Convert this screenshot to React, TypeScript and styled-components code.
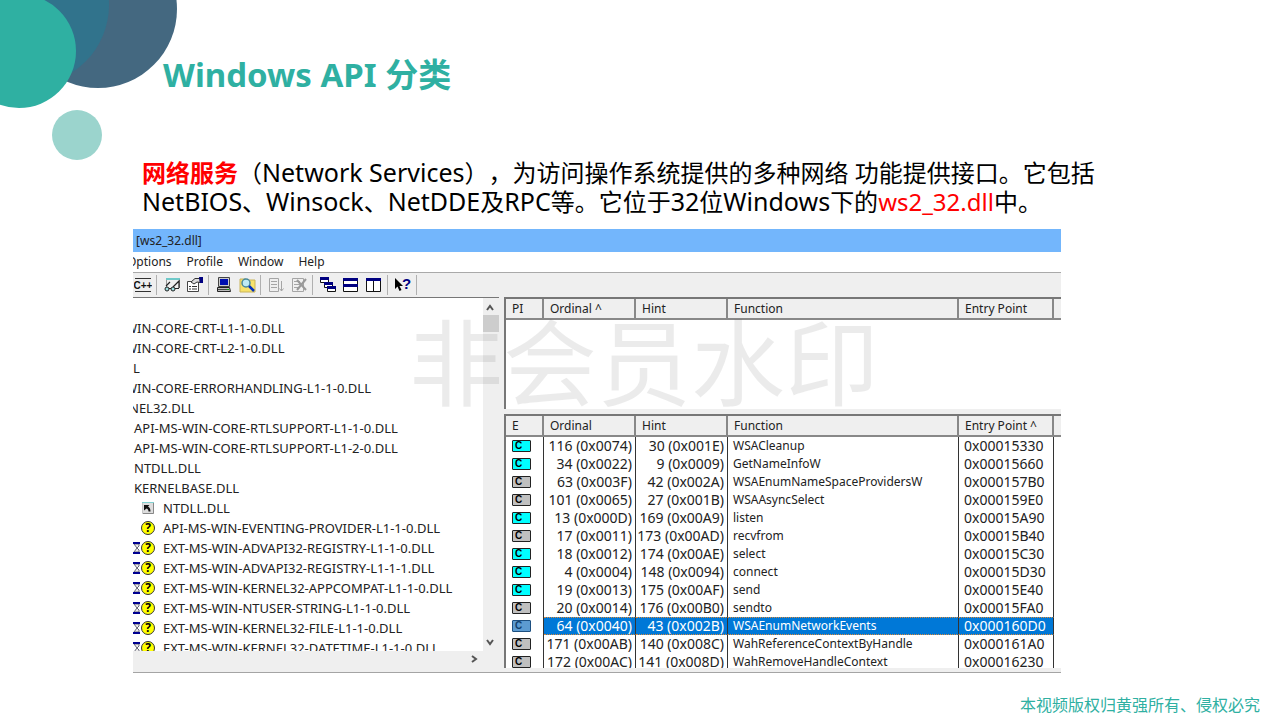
import React from "react";
import styled, { createGlobalStyle } from "styled-components";

const GlobalStyle = createGlobalStyle`
  *, *::before, *::after { box-sizing: border-box; }
  body { margin: 0; background: #fff; }
  button { border: 0; padding: 0; background: none; font: inherit; color: inherit; }
`;

const slideFont = `"Noto Sans", "Noto Sans CJK SC", sans-serif`;
const teal = "#2fb0a2";

const Slide = styled.main`
  position: relative;
  display: flex;
  flex-direction: column;
  min-height: 100vh;
  padding-top: 55px;
  overflow: hidden;
  font-family: ${slideFont};
  color: #000;
`;

const Bubbles = styled.svg`
  position: absolute;
  left: 0;
  top: 0;
`;

const Title = styled.h1`
  position: relative;
  margin: 0 0 63px 163px;
  font-size: 33px;
  line-height: 40px;
  font-weight: 700;
  color: ${teal};
`;

const Description = styled.p`
  margin: 0 0 13px 142px;
  font-size: 24px;
  line-height: 29px;
  white-space: nowrap;
  text-spacing-trim: space-all;
`;

const Latin = styled.span`
  font-size: 25px;
  line-height: 24px;
`;

const Red = styled.span<{ $bold?: boolean }>`
  color: #f00;
  font-weight: ${(p) => (p.$bold ? 700 : 400)};
`;

const Footer = styled.footer`
  margin: 20px 20px 3px;
  font-size: 16px;
  line-height: 24px;
  text-align: right;
  color: ${teal};
`;

const AppWindow = styled.section`
  position: relative;
  margin: 0 219px 0 133px;
  overflow: hidden;
  background: #efefef;
  border-bottom: 1px solid #a4a4a4;
  font-size: 12px;
  color: #222;
`;

const TitleBar = styled.div`
  padding-left: 3px;
  background: #73b6fc;
  line-height: 23px;
`;

const MenuBar = styled.nav`
  display: flex;
  gap: 15px;
  height: 20px;
  margin-left: -6px;
  background: #fff;
  line-height: 20px;
`;

const Toolbar = styled.div`
  display: flex;
  align-items: center;
  height: 25px;
  margin-left: -2px;
  border-top: 1px solid #a9a9a9;
`;

const ToolButton = styled.button`
  display: flex;
  justify-content: center;
  width: 23px;
`;

const Separator = styled.span`
  width: 1px;
  height: 20px;
  margin: 0 3px 0 2px;
  background: #b0b0b0;
`;

const Work = styled.div`
  display: grid;
  grid-template-columns: 371px 1fr;
  height: 375px;
  padding-bottom: 4px;
`;

const TreePane = styled.div`
  display: grid;
  grid-template-columns: 1fr 16px;
  grid-template-rows: 1fr 17px;
  margin-right: 5px;
  border-top: 1px solid #777;
  overflow: hidden;
`;

const Tree = styled.ul`
  margin: 0;
  padding: 0;
  list-style: none;
  overflow: hidden;
  background: #fff;
  font-size: 13px;
`;

const TreeRow = styled.li<{ $indent: number }>`
  display: flex;
  align-items: center;
  height: 20px;
  margin-left: ${(p) => p.$indent}px;
  line-height: 20px;
  white-space: nowrap;
`;

const RowIcons = styled.span`
  display: flex;
  justify-content: flex-end;
  align-items: center;
  width: 22px;
  margin-right: 8px;
`;

const Unknown = styled.span`
  flex: none;
  width: 14px;
  height: 14px;
  border: 1px solid #333;
  border-radius: 7px;
  background: #ff0;
  color: #000;
  font-size: 12px;
  font-weight: 700;
  line-height: 12px;
  text-align: center;
`;

const VScroll = styled.div`
  display: flex;
  flex-direction: column;
  grid-row: span 2;
  padding-bottom: 17px;
`;

const HScroll = styled.div`
  display: flex;
  justify-content: flex-end;
`;

const ArrowButton = styled.button`
  display: flex;
  align-items: center;
  justify-content: center;
  width: 16px;
  height: 17px;
`;

const Thumb = styled.span`
  height: 17px;
  margin-bottom: auto;
  background: #cdcdcd;
`;

const Lists = styled.div`
  display: grid;
  grid-template-rows: 112px 1fr;
  gap: 5px;
  min-width: 0;
  overflow: hidden;
`;

const ListPane = styled.div`
  overflow: hidden;
  background: #fff;
  border-top: 2px solid #777;
  border-left: 2px solid #777;
`;

const DataTable = styled.table`
  width: 100%;
  table-layout: fixed;
  border-collapse: separate;
  border-spacing: 0;
`;

const HeadCell = styled.th`
  height: 21px;
  padding: 0 0 0 6px;
  background: #efefef;
  border-bottom: 2px solid #888;
  border-right: 2px solid #888;
  font-weight: 400;
  line-height: 18px;
  text-align: left;
  white-space: nowrap;
  &:last-child { border-right: 0; }
`;

const BodyRow = styled.tr<{ $selected?: boolean }>`
  color: ${(p) => (p.$selected ? "#fff" : "#222")};
  td:nth-child(n + 2):nth-child(-n + 5) {
    background: ${(p) => (p.$selected ? "#0078d7" : "transparent")};
    border-top: ${(p) => (p.$selected ? "1px dotted #d98a3c" : "0")};
    border-bottom: ${(p) => (p.$selected ? "1px dotted #d98a3c" : "0")};
  }
`;

const Cell = styled.td<{ $kind?: "number" | "entry" | "icon" }>`
  height: 18px;
  padding: ${(p) => (p.$kind === "number" ? "0 3px 0 0" : p.$kind === "icon" ? "0 0 0 6px" : "0 0 0 5px")};
  border-right: 1px solid #333;
  font-size: ${(p) => (p.$kind === "number" || p.$kind === "entry" ? 14 : 12)}px;
  line-height: 16px;
  text-align: ${(p) => (p.$kind === "number" ? "right" : "left")};
  white-space: nowrap;
  &:last-child { border-right: 0; }
`;

const Badge = styled.span<{ $tone: Tone }>`
  display: block;
  width: 19px;
  height: 12px;
  padding-left: 2px;
  border: 1px solid ${(p) => (p.$tone === "blue" ? "#1c4f80" : "#222")};
  border-radius: 1px;
  background: ${(p) => ({ cyan: "#00ffff", gray: "#c0c0c0", blue: "#5c9bd1" })[p.$tone]};
  color: ${(p) => (p.$tone === "blue" ? "#123f6c" : "#000")};
  font: 700 10px/10px "Liberation Sans", sans-serif;
`;

const Watermark = styled.div`
  position: absolute;
  left: 8px;
  right: 0;
  top: 311px;
  font-family: "Noto Sans CJK SC", sans-serif;
  font-size: 94px;
  line-height: 94px;
  text-align: center;
  color: rgba(0, 0, 0, 0.08);
  pointer-events: none;
`;

type Tone = "cyan" | "gray" | "blue";

const Icon = ({ children }: { children: React.ReactNode }) => (
  <svg width="18" height="18" viewBox="0 0 18 18" fill="none">{children}</svg>
);

const CppIcon = () => (
  <Icon>
    <path d="M1 2.5h16M1 15.5h16" stroke="#333" />
    <text x="9" y="12.5" textAnchor="middle" fontFamily="Liberation Sans" fontWeight="700" fontSize="10" fill="#111">C++</text>
  </Icon>
);
const GlassesIcon = () => (
  <Icon>
    <path d="M3 2h14v2H3z" fill="#6fc9c9" />
    <path d="M3.5 4v7M16.5 4v8" stroke="#999" />
    <path d="M3 10l4-4M10 11l6-6v7" stroke="#222" strokeWidth="1.2" />
    <circle cx="4" cy="13" r="2" fill="#9fe0e0" stroke="#222" />
    <circle cx="10" cy="13" r="2" fill="#9fe0e0" stroke="#222" />
    <path d="M6 12.5h2M12 12.5h4" stroke="#222" />
  </Icon>
);
const PropertiesIcon = () => (
  <Icon>
    <path d="M1.5 5.500h11v10h-11z" fill="#fff" stroke="#444" />
    <path d="M3 10.500h2M6 10.500h5M3 13h2M6 13h5" stroke="#333" />
    <path d="M5 6l4-3.500h5v4l-3-.5-3 2z" fill="#ddd" stroke="#333" />
    <path d="M13 1h4v6h-3z" fill="#000080" />
  </Icon>
);
const ComputerIcon = () => (
  <Icon>
    <path d="M3.500 1.500h11v9h-11z" fill="#ccc" stroke="#444" />
    <path d="M5 3h8v6H5z" fill="#0010b0" />
    <path d="M2.500 11.500h12l1 4h-13z" fill="#bbb" stroke="#222" />
    <path d="M3 13.500h9" stroke="#444" />
    <path d="M12 13.500h2" stroke="#0a0" />
  </Icon>
);
const SearchIcon = () => (
  <Icon>
    <path d="M2 3h6l1 1h8v12H2z" fill="#f7e26b" stroke="#c9b45a" />
    <circle cx="8" cy="7" r="4" fill="#bdeaf4" stroke="#48899b" strokeWidth="1.5" />
    <path d="M11 10l5 5" stroke="#0030c0" strokeWidth="2.5" />
  </Icon>
);
const ListDownIcon = () => (
  <Icon>
    <path d="M2.500 2.500h9v13h-9zM4 5.500h6M4 8.500h6M4 11.500h6M14.500 5v10M12.500 12.500l2 2.500 2-2.500" stroke="#a5a5a5" />
  </Icon>
);
const ListCrossIcon = () => (
  <Icon>
    <path d="M2.500 2.500h11v13h-11zM4 5.500h6M4 8.500h6M4 11.500h6" stroke="#a5a5a5" />
    <path d="M7 4l9 10M16 3L7 14" stroke="#999" strokeWidth="2" />
  </Icon>
);
const CascadeIcon = () => (
  <Icon>
    {[[1, 1], [5, 6], [8, 10]].map(([x, y]) => (
      <g key={x}>
        <path d={`M${x}.5 ${y}.5h8v5h-8z`} fill="#fff" stroke="#111" />
        <path d={`M${x} ${y}h9v3h-9z`} fill="#000080" />
      </g>
    ))}
  </Icon>
);
const TileRowsIcon = () => (
  <Icon>
    <path d="M1.500 2.500h14v13h-14z" fill="#fff" stroke="#111" />
    <path d="M1 2h15v3H1zM1 8h15v3H1z" fill="#000080" />
  </Icon>
);
const TileColumnsIcon = () => (
  <Icon>
    <path d="M1.500 2.500h14v13h-14zM8.500 2.500v13" fill="#fff" stroke="#111" />
    <path d="M1 2h15v3H1z" fill="#000080" />
  </Icon>
);
const HelpIcon = () => (
  <Icon>
    <path d="M1 2v11l2.500-2.500L5.500 15l2-1-2-4H9z" fill="#000" />
    <text x="8" y="13" fontFamily="Liberation Sans" fontWeight="700" fontSize="15" fill="#000080">?</text>
  </Icon>
);
const Hourglass = () => (
  <svg width="8" height="14" viewBox="0 0 8 14" fill="none">
    <path d="M1 3l3 4-3 4h5V9L4 7l2-2V3z" fill="#eee" stroke="#667" />
    <path d="M0 2h7M0 12h7" stroke="#000090" strokeWidth="2" />
  </svg>
);
const Duplicate = () => (
  <svg width="14" height="14" viewBox="0 0 14 14" fill="none">
    <path d="M1.500 1.500h11v11h-11z" fill="#ddd" stroke="#c4c4c4" />
    <path d="M1 1.500h12" stroke="#7fd0d0" />
    <path d="M12.500 2v10.500H2" stroke="#888" />
    <path d="M3 4h5.500L7 5.500c2 1 2.500 3 2.500 5H7.500c0-1.500-.5-2.500-2-3L3 9.500z" fill="#111" />
  </svg>
);
const Chevron = ({ d }: { d: string }) => (
  <svg width="10" height="10" viewBox="0 0 10 10" fill="none">
    <path d={d} stroke="#555" strokeWidth="2" />
  </svg>
);

const tools: ([string, () => React.JSX.Element] | null)[] = [
  ["Undecorate C++", CppIcon],
  null,
  ["View", GlassesIcon],
  ["Properties", PropertiesIcon],
  null,
  ["System information", ComputerIcon],
  ["Search order", SearchIcon],
  null,
  ["Auto expand", ListDownIcon],
  ["Clear", ListCrossIcon],
  null,
  ["Cascade", CascadeIcon],
  ["Tile horizontally", TileRowsIcon],
  ["Tile vertically", TileColumnsIcon],
  null,
  ["Help", HelpIcon],
  null,
];

type Mark = "dup" | "unknown" | "delayed";
const modules: [string, number, Mark?][] = [
  ["", 0],
  ["WIN-CORE-CRT-L1-1-0.DLL", -8],
  ["WIN-CORE-CRT-L2-1-0.DLL", -8],
  ["L", 0],
  ["WIN-CORE-ERRORHANDLING-L1-1-0.DLL", -8],
  ["NEL32.DLL", -4],
  ["API-MS-WIN-CORE-RTLSUPPORT-L1-1-0.DLL", 1],
  ["API-MS-WIN-CORE-RTLSUPPORT-L1-2-0.DLL", 1],
  ["NTDLL.DLL", 1],
  ["KERNELBASE.DLL", 1],
  ["NTDLL.DLL", 0, "dup"],
  ["API-MS-WIN-EVENTING-PROVIDER-L1-1-0.DLL", 0, "unknown"],
  ["EXT-MS-WIN-ADVAPI32-REGISTRY-L1-1-0.DLL", 0, "delayed"],
  ["EXT-MS-WIN-ADVAPI32-REGISTRY-L1-1-1.DLL", 0, "delayed"],
  ["EXT-MS-WIN-KERNEL32-APPCOMPAT-L1-1-0.DLL", 0, "delayed"],
  ["EXT-MS-WIN-NTUSER-STRING-L1-1-0.DLL", 0, "delayed"],
  ["EXT-MS-WIN-KERNEL32-FILE-L1-1-0.DLL", 0, "delayed"],
  ["EXT-MS-WIN-KERNEL32-DATETIME-L1-1-0.DLL", 0, "delayed"],
];

const exportsList: [Tone, string, string, string, string][] = [
  ["cyan", "116 (0x0074)", "30 (0x001E)", "WSACleanup", "0x00015330"],
  ["cyan", "34 (0x0022)", "9 (0x0009)", "GetNameInfoW", "0x00015660"],
  ["gray", "63 (0x003F)", "42 (0x002A)", "WSAEnumNameSpaceProvidersW", "0x000157B0"],
  ["gray", "101 (0x0065)", "27 (0x001B)", "WSAAsyncSelect", "0x000159E0"],
  ["cyan", "13 (0x000D)", "169 (0x00A9)", "listen", "0x00015A90"],
  ["gray", "17 (0x0011)", "173 (0x00AD)", "recvfrom", "0x00015B40"],
  ["cyan", "18 (0x0012)", "174 (0x00AE)", "select", "0x00015C30"],
  ["cyan", "4 (0x0004)", "148 (0x0094)", "connect", "0x00015D30"],
  ["cyan", "19 (0x0013)", "175 (0x00AF)", "send", "0x00015E40"],
  ["gray", "20 (0x0014)", "176 (0x00B0)", "sendto", "0x00015FA0"],
  ["blue", "64 (0x0040)", "43 (0x002B)", "WSAEnumNetworkEvents", "0x000160D0"],
  ["gray", "171 (0x00AB)", "140 (0x008C)", "WahReferenceContextByHandle", "0x000161A0"],
  ["gray", "172 (0x00AC)", "141 (0x008D)", "WahRemoveHandleContext", "0x00016230"],
];

const Columns = () => (
  <colgroup>
    <col width="38" />
    <col width="92" />
    <col width="92" />
    <col />
    <col width="95" />
    <col width="7" />
  </colgroup>
);

const Head = ({ labels }: { labels: string[] }) => (
  <thead>
    <tr>
      {labels.map((label, i) => (
        <HeadCell key={i} scope="col">{label}</HeadCell>
      ))}
    </tr>
  </thead>
);

export default function App() {
  return (
    <>
      <GlobalStyle />
      <Slide>
        <Bubbles width="180" height="162" aria-hidden="true">
          <circle cx="98" cy="9" r="79" fill="#446880" />
          <circle cx="29" cy="5" r="80" fill="#31738c" />
          <circle cx="19" cy="51" r="57" fill={teal} />
          <circle cx="77" cy="135" r="25" fill="#9bd4cd" />
        </Bubbles>
        <Title>Windows API 分类</Title>
        <Description>
          <Red $bold>网络服务</Red>（<Latin>Network Services</Latin>），为访问操作系统提供的多种网络 功能提供接口。它包括
          <br />
          <Latin>NetBIOS</Latin>、<Latin>Winsock</Latin>、<Latin>NetDDE</Latin>及<Latin>RPC</Latin>等。它位于<Latin>32</Latin>位<Latin>Windows</Latin>下的<Red>ws2_32.dll</Red>中。
        </Description>
        <AppWindow>
          <TitleBar>[ws2_32.dll]</TitleBar>
          <MenuBar>
            <button>Options</button>
            <button>Profile</button>
            <button>Window</button>
            <button>Help</button>
          </MenuBar>
          <Toolbar>
            {tools.map((tool, i) => {
              if (!tool) return <Separator key={i} />;
              const [label, Glyph] = tool;
              return (
                <ToolButton key={i} aria-label={label}>
                  <Glyph />
                </ToolButton>
              );
            })}
          </Toolbar>
          <Work>
            <TreePane>
              <Tree>
                {modules.map(([name, indent, mark], i) => (
                  <TreeRow key={i} $indent={indent}>
                    {mark && (
                      <RowIcons>
                        {mark === "delayed" && <Hourglass />}
                        {mark === "dup" ? <Duplicate /> : <Unknown>?</Unknown>}
                      </RowIcons>
                    )}
                    {name}
                  </TreeRow>
                ))}
              </Tree>
              <VScroll>
                <ArrowButton aria-label="Scroll up"><Chevron d="M1 8l3-4 3 4" /></ArrowButton>
                <Thumb />
                <ArrowButton aria-label="Scroll down"><Chevron d="M1 2l3 4 3-4" /></ArrowButton>
              </VScroll>
              <HScroll>
                <ArrowButton aria-label="Scroll right"><Chevron d="M2 1l4 3-4 3" /></ArrowButton>
              </HScroll>
            </TreePane>
            <Lists>
              <ListPane>
                <DataTable>
                  <Columns />
                  <Head labels={["PI", "Ordinal ^", "Hint", "Function", "Entry Point", ""]} />
                </DataTable>
              </ListPane>
              <ListPane>
                <DataTable>
                  <Columns />
                  <Head labels={["E", "Ordinal", "Hint", "Function", "Entry Point ^", ""]} />
                  <tbody>
                    {exportsList.map(([tone, ordinal, hint, name, entry]) => (
                      <BodyRow key={name} $selected={tone === "blue"}>
                        <Cell $kind="icon"><Badge $tone={tone}>C</Badge></Cell>
                        <Cell $kind="number">{ordinal}</Cell>
                        <Cell $kind="number">{hint}</Cell>
                        <Cell>{name}</Cell>
                        <Cell $kind="entry">{entry}</Cell>
                        <Cell />
                      </BodyRow>
                    ))}
                  </tbody>
                </DataTable>
              </ListPane>
            </Lists>
          </Work>
        </AppWindow>
        <Watermark aria-hidden="true">非会员水印</Watermark>
        <Footer>本视频版权归黄强所有、侵权必究</Footer>
      </Slide>
    </>
  );
}
